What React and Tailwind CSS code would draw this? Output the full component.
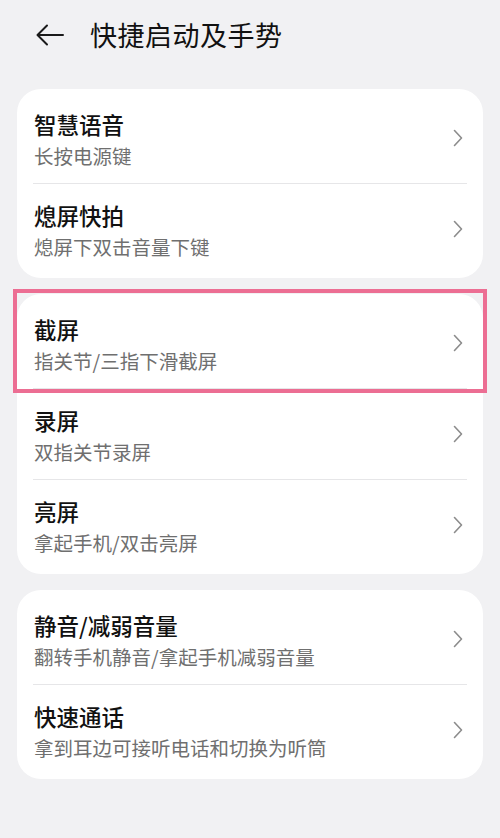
import React from "react";

const groups = [
  [
    { title: "智慧语音", sub: "长按电源键" },
    { title: "熄屏快拍", sub: "熄屏下双击音量下键" },
  ],
  [
    { title: "截屏", sub: "指关节/三指下滑截屏", marked: true },
    { title: "录屏", sub: "双指关节录屏" },
    { title: "亮屏", sub: "拿起手机/双击亮屏" },
  ],
  [
    { title: "静音/减弱音量", sub: "翻转手机静音/拿起手机减弱音量" },
    { title: "快速通话", sub: "拿到耳边可接听电话和切换为听筒" },
  ],
];

function Chevron() {
  return (
    <svg width="12" height="18" viewBox="0 0 12 18" fill="none" className="shrink-0">
      <path d="M2.5 1.5 L9.5 9 L2.5 16.5" stroke="#8c8c8c" strokeWidth="1.6" strokeLinecap="round" strokeLinejoin="round" />
    </svg>
  );
}

function Row({ item, last }) {
  return (
    <div className="relative">
      <div className="flex items-center h-[90px] pl-[17px] pr-[19px]">
        <div className="flex-1 flex flex-col gap-[6px] pt-[1px]">
          <div className="text-[22.5px] leading-[28px] font-medium text-[#111]">{item.title}</div>
          <div className="text-[19.5px] leading-[24px] text-[#6f6f6f]">{item.sub}</div>
        </div>
        <Chevron />
      </div>
      {!last && <div className="mx-4 h-px bg-[#e6e6e8]" />}
      {item.marked && (
        <div className="absolute left-[-4px] right-[-4px] top-[-9px] h-[104px] border-[4px] border-[#ec6e93]" />
      )}
    </div>
  );
}

export default function App() {
  return (
    <div
      className="w-[500px] h-[838px] bg-[#f1f1f3] overflow-hidden"
      style={{ fontFamily: '"Noto Sans CJK SC", "Noto Sans", sans-serif' }}
    >
      <div className="flex items-center h-[70px] pl-[35px]">
        <svg width="30" height="24" viewBox="0 0 30 24" fill="none">
          <path d="M28 12 H3 M12 2.5 L2.5 12 L12 21.5" stroke="#1a1a1a" strokeWidth="2" strokeLinecap="round" strokeLinejoin="round" />
        </svg>
        <div className="ml-[25px] text-[27px] leading-[34px] text-[#111] tracking-[0.5px]">快捷启动及手势</div>
      </div>
      <div className="flex flex-col gap-4 px-[17px] pt-[19px]">
        {groups.map((g, gi) => (
          <div key={gi} className="bg-white rounded-[24px] py-[4px]">
            {g.map((item, i) => (
              <Row key={i} item={item} last={i === g.length - 1} />
            ))}
          </div>
        ))}
      </div>
    </div>
  );
}
